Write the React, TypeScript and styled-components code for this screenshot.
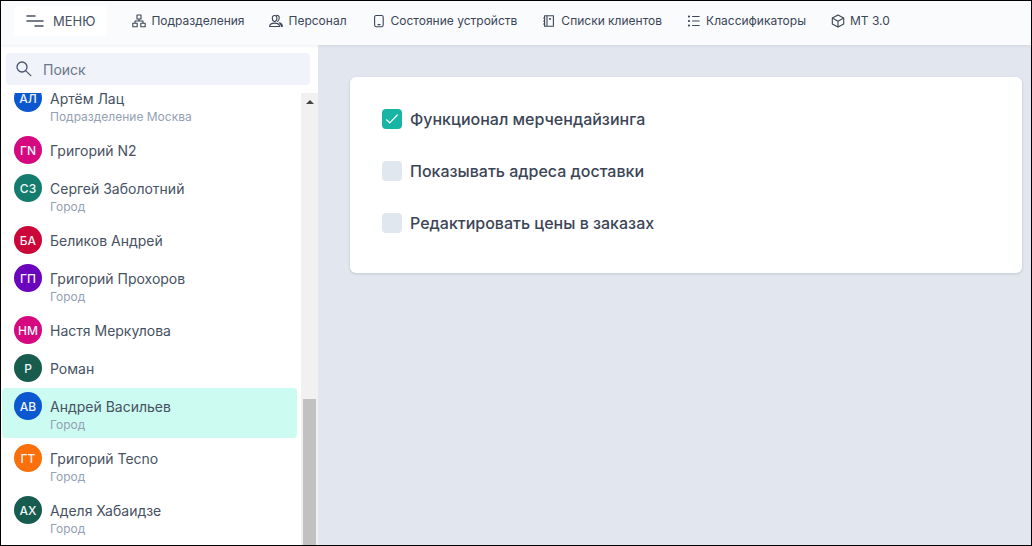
import React, { useLayoutEffect, useRef, useState } from "react";
import styled, { createGlobalStyle } from "styled-components";

const GlobalStyle = createGlobalStyle`
  *, *::before, *::after { box-sizing: border-box; }
  body { margin: 0; font-family: Inter, "Noto Sans", sans-serif; color: #475569; }
  button, input { font: inherit; color: inherit; }
`;

const Frame = styled.div`
  display: flex;
  flex-direction: column;
  height: 100vh;
  border: 1px solid #000;
  background: #e1e6ef;
`;

const Header = styled.header`
  position: relative;
  display: flex;
  flex: none;
  align-items: center;
  gap: 25px;
  height: 44px;
  padding: 0 13px 4px;
  background: #fafbfd;
  box-shadow: 0 1px 3px rgba(30, 41, 59, 0.08);
`;

const MenuButton = styled.button`
  display: flex;
  align-items: center;
  gap: 9px;
  height: 30px;
  padding: 0 12px;
  border: 0;
  border-radius: 4px;
  background: #fff;
  color: #475262;
  font-size: 13px;
`;

const Nav = styled.nav`
  display: flex;
  gap: 25px;
`;

const NavLink = styled.a`
  display: flex;
  align-items: center;
  gap: 5px;
  color: #3b4656;
  font-size: 12px;
  line-height: 16px;
  text-decoration: none;
  white-space: nowrap;
`;

const Icon = styled.svg`
  flex: none;
  fill: none;
  stroke: currentColor;
  stroke-linecap: round;
  stroke-linejoin: round;
`;

const Body = styled.div`
  display: flex;
  flex: 1;
  min-height: 0;
`;

const Sidebar = styled.aside`
  display: flex;
  flex: none;
  flex-direction: column;
  width: 317px;
  background: #fff;
`;

const Search = styled.label`
  display: flex;
  flex: none;
  align-items: center;
  gap: 10px;
  height: 32px;
  margin: 8px 8px 8px 5px;
  padding: 0 9px;
  border-radius: 4px;
  background: #f0f3f9;
  color: #475569;
`;

const SearchInput = styled.input`
  flex: 1;
  min-width: 0;
  padding: 0;
  border: 0;
  outline: 0;
  background: transparent;
  font-size: 14px;
  &::placeholder { color: #6b7788; opacity: 1; }
`;

const ListArea = styled.div`
  display: flex;
  flex: 1;
  min-height: 0;
`;

const List = styled.ul`
  display: flex;
  flex: 1;
  flex-direction: column;
  gap: 2px;
  margin: 0;
  padding: 0 4px 40px 1px;
  overflow-y: auto;
  scrollbar-width: none;
  list-style: none;
`;

const Person = styled.button<{ $active: boolean; $tall: boolean }>`
  display: flex;
  align-items: flex-start;
  gap: 8px;
  width: 100%;
  height: ${(p) => (p.$tall ? 50 : 36)}px;
  padding: 4px 12px;
  border: 0;
  border-radius: 4px;
  background: ${(p) => (p.$active ? "#ccfbf1" : "transparent")};
  text-align: left;
`;

const Avatar = styled.span<{ $color: string }>`
  display: flex;
  flex: none;
  align-items: center;
  justify-content: center;
  width: 28px;
  height: 28px;
  border-radius: 50%;
  background: ${(p) => p.$color};
  color: #f1f5f9;
  font-size: 12px;
  font-weight: 500;
`;

const PersonText = styled.span`
  display: flex;
  flex-direction: column;
  padding-top: 5px;
`;

const Name = styled.span`
  color: #475262;
  font-size: 14px;
  line-height: 20px;
`;

const Place = styled.span`
  color: #94a0b3;
  font-size: 12px;
  line-height: 16px;
`;

const ScrollTrack = styled.div`
  display: flex;
  flex: none;
  flex-direction: column;
  align-items: center;
  width: 17px;
  padding: 7px 2px 0;
  background: #f1f1f1;
`;

const ScrollArrow = styled.span`
  border: 4px solid transparent;
  border-top: 0;
  border-bottom-color: #444;
`;

const ScrollThumb = styled.div`
  flex: 1;
  width: 13px;
  margin-top: 295px;
  background: #c1c1c1;
`;

const Main = styled.main`
  flex: 1;
  min-width: 0;
  padding: 32px 9px 32px 32px;
`;

const Card = styled.section`
  display: flex;
  flex-direction: column;
  align-items: flex-start;
  gap: 28px;
  padding: 30px 32px 38px;
  border-radius: 6px;
  background: #fff;
  box-shadow: 0 1px 3px rgba(30, 41, 59, 0.16);
`;

const Option = styled.label`
  display: flex;
  align-items: center;
  gap: 8px;
  color: #3b4556;
  font-size: 16px;
  font-weight: 500;
  line-height: 24px;
`;

const Checkbox = styled.input`
  flex: none;
  width: 20px;
  height: 20px;
  margin: 0;
  appearance: none;
  border-radius: 4px;
  background: #e1e7ef;
  &:checked { background: #18b5a4; }
`;

const CheckSlot = styled.span`
  display: grid;
  flex: none;
  & > * { grid-area: 1 / 1; place-self: center; pointer-events: none; }
  & > input { pointer-events: auto; }
  & > svg { color: #fff; }
`;

const navItems = [
  {
    label: "Подразделения",
    icon: <path d="M5 1h4v4H5zM.8 9.2h4.4v3.6H.8zM8.8 9.2h4.4v3.6H8.8zM7 5v2M3 9.2V7h8v2.2" />,
  },
  {
    label: "Персонал",
    icon: (
      <>
        <path d="M5.6 1.5c-1.7 0-2.4 1.2-2.3 2.8.1 1.7.9 3.2 2.3 3.2s2.2-1.5 2.3-3.2c.1-1.6-.6-2.8-2.3-2.8zM.6 12.5c.1-2.4 2-3.4 5-3.4s4.9 1 5 3.4z" />
        <path d="M7.6 1.3c2 0 2.8 1.2 2.6 3-.1 1.4-.7 2.6-1.6 3.2" />
        <path d="M10.4 8.9c1.9.4 2.9 1.5 2.9 3.6h-.9c0-1.4-.7-2.6-2-3.6z" fill="currentColor" />
      </>
    ),
  },
  {
    label: "Состояние устройств",
    icon: (
      <>
        <rect x="2.6" y="1.5" width="8.6" height="11.2" rx="1.6" />
        <path d="M6 10.6h2" />
      </>
    ),
  },
  {
    label: "Списки клиентов",
    icon: (
      <>
        <path d="M2.6 1.8h8.8v10.4H2.6zM5 1.8v10.4M1.6 4h1M1.6 7h1M1.6 10h1" />
        <path d="M7.6 4.5h.8v.8h-.8z" />
      </>
    ),
  },
  {
    label: "Классификаторы",
    icon: (
      <>
        <path d="M5.5 2.5h6.7M5.5 7h6.7M5.5 11.5h6.7" />
        <path d="M1.9 2.5h.2M1.9 7h.2M1.9 11.5h.2" strokeWidth={2} />
      </>
    ),
  },
  {
    label: "МТ 3.0",
    icon: <path d="M7 .9l5.7 3.1v6L7 13.1 1.3 10V4zM1.3 4L7 7.2 12.7 4M7 7.2v5.9" />,
  },
];

const people = [
  { initials: "АЛ", name: "Артём Лац", place: "Подразделение Москва", color: "#0b57d0" },
  { initials: "ГN", name: "Григорий N2", color: "#d5087f" },
  { initials: "СЗ", name: "Сергей Заболотний", place: "Город", color: "#137c6d" },
  { initials: "БА", name: "Беликов Андрей", color: "#cb0638" },
  { initials: "ГП", name: "Григорий Прохоров", place: "Город", color: "#6a04bd" },
  { initials: "НМ", name: "Настя Меркулова", color: "#d5087f" },
  { initials: "Р", name: "Роман", color: "#185c50" },
  { initials: "АВ", name: "Андрей Васильев", place: "Город", color: "#0b57d0" },
  { initials: "ГТ", name: "Григорий Tecno", place: "Город", color: "#fb700a" },
  { initials: "АХ", name: "Аделя Хабаидзе", place: "Город", color: "#185c50" },
];

const options = ["Функционал мерчендайзинга", "Показывать адреса доставки", "Редактировать цены в заказах"];

export default function App() {
  const listRef = useRef<HTMLUListElement>(null);
  const [active, setActive] = useState(7);
  const [checked, setChecked] = useState([true, false, false]);

  useLayoutEffect(() => {
    if (listRef.current) listRef.current.scrollTop = 13;
  }, []);

  return (
    <>
      <GlobalStyle />
      <Frame>
        <Header>
          <MenuButton type="button">
            <Icon width={18} height={14} viewBox="0 0 18 14" strokeWidth={1.5}>
              <path d="M1 2h8M1 7h16M9 12h8" />
            </Icon>
            МЕНЮ
          </MenuButton>
          <Nav>
            {navItems.map((item) => (
              <NavLink href="#" key={item.label}>
                <Icon width={14} height={14} viewBox="0 0 14 14" strokeWidth={1.1}>
                  {item.icon}
                </Icon>
                {item.label}
              </NavLink>
            ))}
          </Nav>
        </Header>
        <Body>
          <Sidebar>
            <Search>
              <Icon width={18} height={18} viewBox="0 0 18 18" strokeWidth={1.3}>
                <circle cx="7" cy="7" r="5" />
                <path d="M10.6 10.6l5.2 5" />
              </Icon>
              <SearchInput type="text" placeholder="Поиск" aria-label="Поиск" />
            </Search>
            <ListArea>
              <List ref={listRef}>
                {people.map((p, i) => (
                  <li key={p.name}>
                    <Person type="button" $active={i === active} $tall={!!p.place} onClick={() => setActive(i)}>
                      <Avatar $color={p.color}>{p.initials}</Avatar>
                      <PersonText>
                        <Name>{p.name}</Name>
                        {p.place && <Place>{p.place}</Place>}
                      </PersonText>
                    </Person>
                  </li>
                ))}
              </List>
              <ScrollTrack aria-hidden="true">
                <ScrollArrow />
                <ScrollThumb />
              </ScrollTrack>
            </ListArea>
          </Sidebar>
          <Main>
            <Card>
              {options.map((label, i) => (
                <Option key={label}>
                  <CheckSlot>
                    <Checkbox
                      type="checkbox"
                      checked={checked[i]}
                      onChange={() => setChecked(checked.map((c, j) => (j === i ? !c : c)))}
                    />
                    {checked[i] && (
                      <Icon width={14} height={14} viewBox="0 0 14 14" strokeWidth={1.2}>
                        <path d="M1.5 7.8l3.2 3L12.3 3" />
                      </Icon>
                    )}
                  </CheckSlot>
                  {label}
                </Option>
              ))}
            </Card>
          </Main>
        </Body>
      </Frame>
    </>
  );
}
